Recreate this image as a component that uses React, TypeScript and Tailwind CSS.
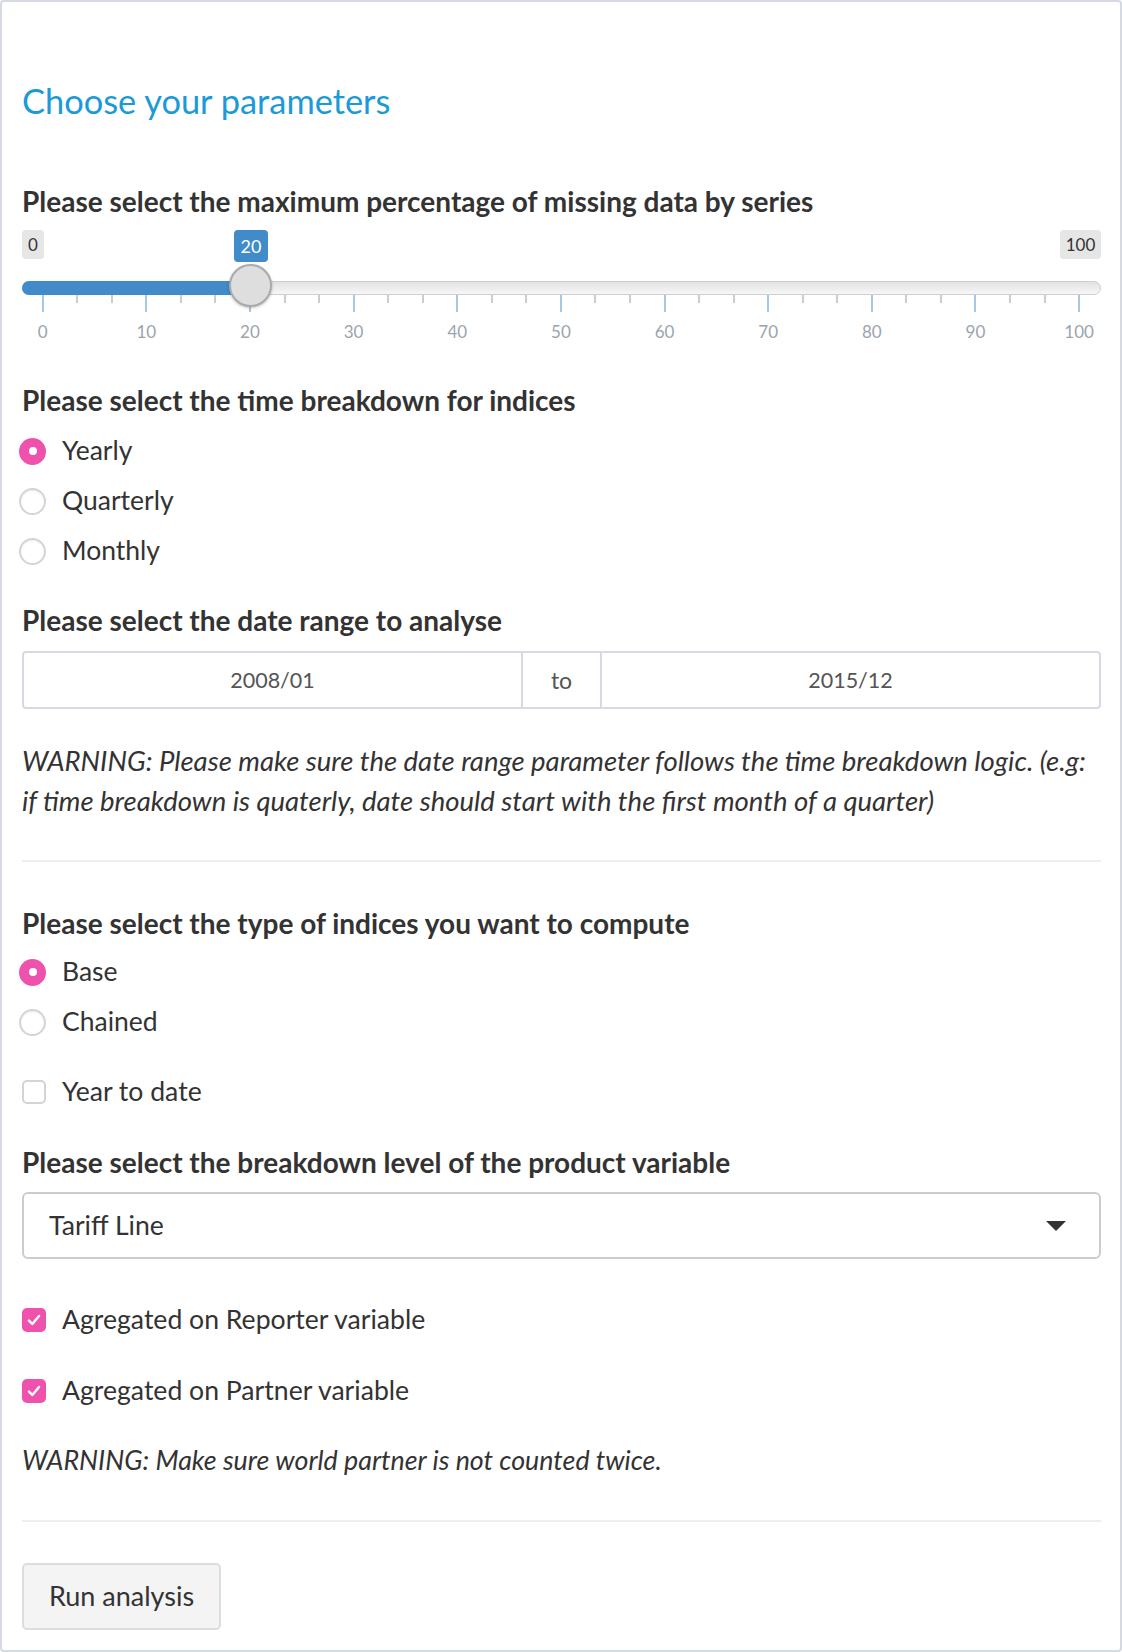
import React from "react";

const TICK_START = 20.7;
const TICK_STEP = 103.64 / 3;

function Radio({ checked, label }: { checked?: boolean; label: string }) {
  return (
    <div className="flex h-[50px] items-center">
      {checked ? (
        <span className="-ml-[3px] flex h-[27px] w-[27px] items-center justify-center rounded-full bg-[#ee52ad]">
          <span className="h-[8px] w-[8px] rounded-full bg-white" />
        </span>
      ) : (
        <span className="-ml-[3px] h-[27px] w-[27px] rounded-full border-2 border-[#d4d4d4] bg-white shadow-[inset_0_1px_2px_rgba(0,0,0,0.08)]" />
      )}
      <span className="ml-[16px] text-[26.5px] text-[#333]">{label}</span>
    </div>
  );
}

function Checkbox({ checked, label }: { checked?: boolean; label: string }) {
  return (
    <div className="flex h-[50px] items-center">
      {checked ? (
        <span className="flex h-[24px] w-[24px] items-center justify-center rounded-[5px] bg-[#ee52ad]">
          <svg width="18" height="18" viewBox="0 0 16 16" fill="none">
            <path d="M3.5 8.5l3 3 6-7" stroke="white" strokeWidth="2.2" strokeLinecap="round" strokeLinejoin="round" />
          </svg>
        </span>
      ) : (
        <span className="h-[24px] w-[24px] rounded-[5px] border-2 border-[#d4d4d4] bg-white" />
      )}
      <span className="ml-[16px] text-[26.6px] text-[#333]">{label}</span>
    </div>
  );
}

function Label({ children, className = "" }: { children: React.ReactNode; className?: string }) {
  return <div className={`h-[36px] text-[28px] leading-[36px] font-bold text-[#333] ${className}`}>{children}</div>;
}

function Slider() {
  const ticks = Array.from({ length: 31 }, (_, i) => i);
  return (
    <div className="relative mt-[9px] h-[120px]">
      {/* min / value / max pills */}
      <span className="absolute left-0 top-[2px] flex h-[29px] w-[22px] items-center justify-center rounded-[4px] bg-[#e6e6e6] text-[17px] text-[#333]">0</span>
      <span className="absolute left-[212px] top-[2px] flex h-[32px] w-[34px] items-center justify-center rounded-[4px] bg-[#428bca] text-[18px] text-white">20</span>
      <span className="absolute right-0 top-[2px] flex h-[29px] w-[41px] items-center justify-center rounded-[4px] bg-[#e6e6e6] text-[17px] text-[#333]">100</span>

      {/* track */}
      <div className="absolute left-0 right-0 top-[53px] h-[14px] rounded-full border border-[#cfcfcf] bg-gradient-to-b from-[#e2e2e2] to-[#f7f7f7]" />
      <div className="absolute left-0 top-[53px] h-[14px] w-[232px] rounded-l-full bg-[#428bca]" />

      {/* grid */}
      {ticks.map((i) => {
        const major = i % 3 === 0;
        return (
          <span
            key={i}
            className={major ? "absolute top-[67px] h-[17px] w-[2px] bg-[#a6c8e8]" : "absolute top-[67px] h-[8px] w-[2px] bg-[#cccccc]"}
            style={{ left: TICK_START + i * TICK_STEP - 1 }}
          />
        );
      })}
      {ticks
        .filter((i) => i % 3 === 0)
        .map((i) => (
          <span
            key={`l${i}`}
            className="absolute top-[92px] w-[40px] -translate-x-1/2 text-center text-[17px] leading-[24px] text-[#9aa4ae]"
            style={{ left: TICK_START + i * TICK_STEP }}
          >
            {(i / 3) * 10}
          </span>
        ))}

      {/* handle */}
      <span className="absolute left-[207px] top-[36px] h-[43px] w-[43px] rounded-full border-2 border-[#aaaaaa] bg-[#dedede] shadow-[0_1px_3px_rgba(0,0,0,0.25)]" />
    </div>
  );
}

export default function App() {
  return (
    <div className="h-[1652px] w-[1122px] bg-white font-[Lato,sans-serif]">
      <div className="box-border h-full w-full rounded-[4px] border-2 border-[#d5dae2] pl-[20px] pr-[19px] pt-[75px]">
        <h3 className="h-[48px] text-[34.4px] leading-[48px] text-[#1b9ad7]">Choose your parameters</h3>

        <Label className="mt-[58px]">Please select the maximum percentage of missing data by series</Label>
        <Slider />

        <Label className="mt-[34px]">Please select the time breakdown for indices</Label>
        <div className="mt-[8px]">
          <Radio checked label="Yearly" />
          <Radio label="Quarterly" />
          <Radio label="Monthly" />
        </div>

        <Label className="mt-[26px]">Please select the date range to analyse</Label>
        <div className="mt-[13px] flex h-[58px] rounded-[4px] border-2 border-[#d5dae2] text-[21.5px] text-[#555]">
          <div className="flex flex-1 items-center justify-center">2008/01</div>
          <div className="flex w-[81px] items-center justify-center border-x-2 border-[#d5dae2] text-[23px]">to</div>
          <div className="flex flex-1 items-center justify-center">2015/12</div>
        </div>

        <p className="mt-[32px] text-[27.5px] leading-[40px] whitespace-nowrap text-[#333] italic">
          WARNING: Please make sure the date range parameter follows the time breakdown logic. (e.g:
          <br />
          if time breakdown is quaterly, date should start with the first month of a quarter)
        </p>

        <hr className="mt-[39px] border-t-2 border-[#eeeeee]" />

        <Label className="mt-[43px]">Please select the type of indices you want to compute</Label>
        <div className="mt-[6px]">
          <Radio checked label="Base" />
          <Radio label="Chained" />
        </div>

        <div className="mt-[20px]">
          <Checkbox label="Year to date" />
        </div>

        <Label className="mt-[27px]">Please select the breakdown level of the product variable</Label>
        <div className="mt-[12px] flex h-[67px] items-center justify-between rounded-[6px] border-2 border-[#cccccc] pl-[25px] pr-[33px]">
          <span className="text-[26.6px] text-[#333]">Tariff Line</span>
          <svg width="20" height="10" viewBox="0 0 20 10">
            <path d="M0 0h20L10 10z" fill="#333" />
          </svg>
        </div>

        <div className="mt-[36px]">
          <Checkbox checked label="Agregated on Reporter variable" />
        </div>
        <div className="mt-[21px]">
          <Checkbox checked label="Agregated on Partner variable" />
        </div>

        <p className="mt-[24px] h-[40px] text-[26.8px] leading-[40px] text-[#333] italic">
          WARNING: Make sure world partner is not counted twice.
        </p>

        <hr className="mt-[40px] border-t-2 border-[#eeeeee]" />

        <button className="mt-[41px] flex h-[67px] w-[199px] items-center justify-center rounded-[5px] border-2 border-[#dddddd] bg-[#f4f4f4] text-[27px] text-[#333]">
          Run analysis
        </button>
      </div>
    </div>
  );
}
